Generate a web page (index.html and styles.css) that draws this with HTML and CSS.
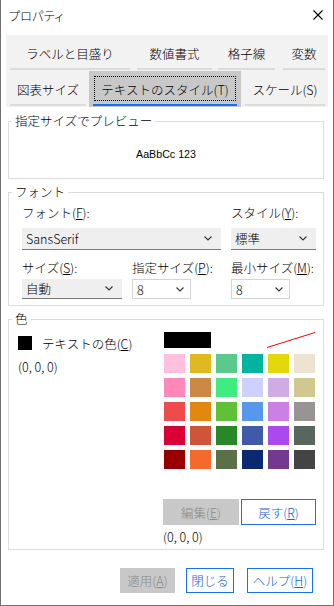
FILE: index.html
```html
<!DOCTYPE html>
<html lang="ja">
<head>
<meta charset="utf-8">
<title>プロパティ</title>
<link rel="stylesheet" href="styles.css">
</head>
<body>
<div class="window">
  <div class="titlebar">
    <span class="title">プロパティ</span>
    <svg class="close" width="10" height="10" viewBox="0 0 10 10"><path d="M0.5 0.5L9.5 9.5M9.5 0.5L0.5 9.5" stroke="#000" stroke-width="1.1" fill="none"/></svg>
  </div>

  <div class="tabs">
    <div class="tabrow">
      <div class="tab w-label"><span class="tab-text">ラベルと目盛り</span><span class="tab-bar"></span></div>
      <div class="tab w-num"><span class="tab-text">数値書式</span><span class="tab-bar"></span></div>
      <div class="tab w-grid"><span class="tab-text">格子線</span><span class="tab-bar"></span></div>
      <div class="tab w-var"><span class="tab-text">変数</span><span class="tab-bar"></span></div>
    </div>
    <div class="tabrow">
      <div class="tab w-size"><span class="tab-text">図表サイズ</span><span class="tab-bar"></span></div>
      <div class="tab sel"><span class="tab-text">テキストのスタイル(T)</span><span class="tab-bar"></span></div>
      <div class="tab w-scale"><span class="tab-text">スケール(S)</span><span class="tab-bar"></span></div>
    </div>
  </div>

  <fieldset class="group g-preview">
    <legend>指定サイズでプレビュー</legend>
    <div class="preview">AaBbCc 123</div>
  </fieldset>

  <fieldset class="group g-font">
    <legend>フォント</legend>
    <div class="font-grid">
      <div class="lbl c12">フォント(<u>F</u>):</div>
      <div class="lbl c3">スタイル(<u>Y</u>):</div>
      <div class="combo flat big c12 w-family"><span>SansSerif</span><svg width="8" height="5" viewBox="0 0 8 5"><path d="M0.5 0.5L4 4L7.5 0.5" stroke="#333" stroke-width="1.1" fill="none"/></svg></div>
      <div class="combo flat big c3 w-style"><span>標準</span><svg width="8" height="5" viewBox="0 0 8 5"><path d="M0.5 0.5L4 4L7.5 0.5" stroke="#333" stroke-width="1.1" fill="none"/></svg></div>
      <div class="lbl l2 c1">サイズ(<u>S</u>):</div>
      <div class="lbl l2 c2">指定サイズ(<u>P</u>):</div>
      <div class="lbl l2 c3">最小サイズ(<u>M</u>):</div>
      <div class="combo flat small c1 w-auto"><span>自動</span><svg width="8" height="5" viewBox="0 0 8 5"><path d="M0.5 0.5L4 4L7.5 0.5" stroke="#333" stroke-width="1.1" fill="none"/></svg></div>
      <div class="combo edit small c2 w-num8"><span>8</span><svg width="8" height="5" viewBox="0 0 8 5"><path d="M0.5 0.5L4 4L7.5 0.5" stroke="#333" stroke-width="1.1" fill="none"/></svg></div>
      <div class="combo edit small c3 w-num8"><span>8</span><svg width="8" height="5" viewBox="0 0 8 5"><path d="M0.5 0.5L4 4L7.5 0.5" stroke="#333" stroke-width="1.1" fill="none"/></svg></div>
    </div>
  </fieldset>

  <fieldset class="group g-color">
    <legend>色</legend>
    <div class="color-grid">
      <div class="color-left">
        <div class="textcolor"><span class="cur-swatch"></span><span>テキストの色(<u>C</u>)</span></div>
        <div class="rgb">(0, 0, 0)</div>
      </div>
      <div class="color-right">
        <svg class="palette-top" width="152" height="17" viewBox="0 0 152 17">
          <rect x="0" y="0" width="47" height="16" fill="#000"/>
          <path d="M103 15.5L151 0.5" stroke="#ff0000" stroke-width="1" fill="none"/>
        </svg>
        <div class="palette">
          <span class="sw" style="background:#ffc0e0"></span>
          <span class="sw" style="background:#e0b820"></span>
          <span class="sw" style="background:#5cc98c"></span>
          <span class="sw" style="background:#00b4a0"></span>
          <span class="sw" style="background:#e4d80c"></span>
          <span class="sw" style="background:#ece4d0"></span>
          <span class="sw" style="background:#ff88b8"></span>
          <span class="sw" style="background:#cc8844"></span>
          <span class="sw" style="background:#40ec80"></span>
          <span class="sw" style="background:#d0d0ff"></span>
          <span class="sw" style="background:#d0ace4"></span>
          <span class="sw" style="background:#d0c890"></span>
          <span class="sw" style="background:#ee4c4c"></span>
          <span class="sw" style="background:#e08810"></span>
          <span class="sw" style="background:#60c038"></span>
          <span class="sw" style="background:#5898e8"></span>
          <span class="sw" style="background:#cc80e4"></span>
          <span class="sw" style="background:#989494"></span>
          <span class="sw" style="background:#d80034"></span>
          <span class="sw" style="background:#d05438"></span>
          <span class="sw" style="background:#288828"></span>
          <span class="sw" style="background:#405aa8"></span>
          <span class="sw" style="background:#ac48f0"></span>
          <span class="sw" style="background:#586660"></span>
          <span class="sw" style="background:#980000"></span>
          <span class="sw" style="background:#f46a2c"></span>
          <span class="sw" style="background:#5c7048"></span>
          <span class="sw" style="background:#0c2870"></span>
          <span class="sw" style="background:#743890"></span>
          <span class="sw" style="background:#444444"></span>
        </div>
        <div class="edit-row">
          <span class="btn disabled w-edit">編集(<u>E</u>)</span>
          <span class="btn active w-reset">戻す(<u>R</u>)</span>
        </div>
        <div class="rgb rgb2">(0, 0, 0)</div>
      </div>
    </div>
  </fieldset>

  <div class="footer">
    <span class="btn disabled f-apply">適用(<u>A</u>)</span>
    <span class="btn active f-close">閉じる</span>
    <span class="btn active f-help">ヘルプ(<u>H</u>)</span>
  </div>
</div>
</body>
</html>
```

FILE: styles.css
```css
html, body {
  margin: 0;
  padding: 0;
  background: #fff;
}

body {
  font-family: "Noto Sans CJK JP", "Noto Sans", sans-serif;
  font-size: 12.5px;
  font-weight: 300;
  color: #000;
}

u {
  text-decoration: underline;
  text-underline-offset: 1px;
}

.window {
  width: 334px;
  height: 606px;
  box-sizing: border-box;
  border: 1px solid #707070;
  border-top: none;
  display: flex;
  flex-direction: column;
  background: #fff;
}

/* title bar */
.titlebar {
  height: 30px;
  flex: none;
  display: flex;
  align-items: center;
  justify-content: space-between;
  padding: 0 10px 0 8px;
}

.title {
  font-size: 12px;
  font-feature-settings: "palt";
  letter-spacing: 0.2px;
}

.close {
  display: block;
}

/* tabs */
.tabs {
  flex: none;
  margin: 5px 5px 0 5px;
  background: #f2f2f2;
}

.tabrow {
  display: flex;
  height: 36px;
  padding-left: 4px;
}

.tab {
  display: flex;
  flex-direction: column;
  align-items: center;
  flex: none;
}

.tab-text {
  height: 33px;
  padding-top: 3px;
  box-sizing: border-box;
  display: flex;
  align-items: center;
  white-space: nowrap;
}

.tab-bar {
  height: 2px;
  align-self: stretch;
  background: #dcdcdc;
}

.w-label { width: 120px; }
.w-num { width: 75px; margin-left: 7px; }
.w-grid { width: 57px; margin-left: 6px; }
.w-var { width: 42px; margin-left: 8px; }
.w-size { width: 76px; }
.w-scale { width: 80px; margin-left: 4px; }

.tab.sel {
  width: 152px;
  margin-left: 3px;
  background: #c8c8c8;
  position: relative;
}

.tab.sel .tab-bar {
  background: #1a6ef5;
  margin: 0 4px;
}

.tab.sel::after {
  content: "";
  position: absolute;
  left: 5px;
  right: 5px;
  top: 5px;
  bottom: 6px;
  border: 1px dotted #000;
}

/* group boxes */
.group {
  flex: none;
  margin: 0 9px 0 7px;
  padding: 0;
  border: 1px solid #dcdcdc;
  min-width: 0;
}

.group legend {
  margin-left: 3px;
  padding: 0 3px;
  line-height: 16px;
  height: 16px;
}

.g-preview {
  margin-top: 6px;
}

.preview {
  height: 49px;
  display: flex;
  align-items: center;
  justify-content: center;
  font-family: "Liberation Sans", Arial, sans-serif;
  font-weight: 400;
  font-size: 10.67px;
}

.g-font {
  margin-top: 5px;
}

.font-grid {
  display: grid;
  grid-template-columns: 110px 99px 85px;
  padding: 5px 0 6px 13px;
}

.lbl {
  height: 16px;
  line-height: 16px;
  white-space: nowrap;
}

.l2 {
  margin-top: 10px;
}

.c1 { grid-column: 1; }
.c2 { grid-column: 2; }
.c3 { grid-column: 3; }
.c12 { grid-column: 1 / span 2; }

.combo {
  display: flex;
  align-items: center;
  justify-content: space-between;
  box-sizing: border-box;
  white-space: nowrap;
}

.combo svg {
  display: block;
  flex: none;
}

.combo.flat {
  background: #efefef;
  border-bottom: 1px solid #7a7a7a;
  padding: 0 9px 0 4px;
}

.combo.edit {
  background: #fff;
  border: 1px solid #d4d4d4;
  padding: 0 6px 0 4px;
}

.combo.big {
  height: 22px;
  margin-top: 7px;
}

.combo.small {
  height: 20px;
  margin-top: 3px;
}

.w-family { width: 199px; }
.w-style { width: 85px; }
.w-auto { width: 100px; }
.w-num8 { width: 59px; }

/* colour group */
.g-color {
  margin-top: 5px;
}

.color-grid {
  display: grid;
  grid-template-columns: 145px 153px;
  padding: 0 0 4px 9px;
}

.color-left {
  padding-top: 9px;
}

.textcolor {
  display: flex;
  align-items: center;
  height: 14px;
  gap: 10px;
  white-space: nowrap;
}

.cur-swatch {
  width: 14px;
  height: 14px;
  background: #000;
  flex: none;
}

.rgb {
  margin-top: 9px;
  line-height: 16px;
  height: 16px;
}

.color-right {
  padding-top: 5px;
}

.palette-top {
  display: block;
  margin-left: 1px;
}

.palette {
  display: grid;
  grid-template-columns: repeat(6, 21px);
  grid-auto-rows: 19px;
  gap: 5px;
  margin-top: 5px;
  margin-left: 1px;
}

.sw {
  display: block;
}

.edit-row {
  display: flex;
  gap: 2px;
  margin-top: 30px;
}

.btn {
  display: flex;
  align-items: center;
  justify-content: center;
  box-sizing: border-box;
  white-space: nowrap;
}

.btn.disabled {
  background: #c8c8c8;
  color: #8a8a8a;
}

.btn.active {
  background: #fff;
  border: 1px solid #1e6ff0;
  color: #1a5ed8;
}

.w-edit { width: 76px; height: 26px; }
.w-reset { width: 75px; height: 26px; }

.rgb2 {
  margin-top: 4px;
}

/* footer */
.footer {
  flex: none;
  display: flex;
  justify-content: flex-end;
  margin-top: 18px;
  padding-right: 20px;
}

.footer .btn {
  height: 25px;
}

.f-apply { width: 55px; }
.f-close { width: 48px; margin-left: 11px; }
.f-help { width: 66px; margin-left: 13px; }
```
